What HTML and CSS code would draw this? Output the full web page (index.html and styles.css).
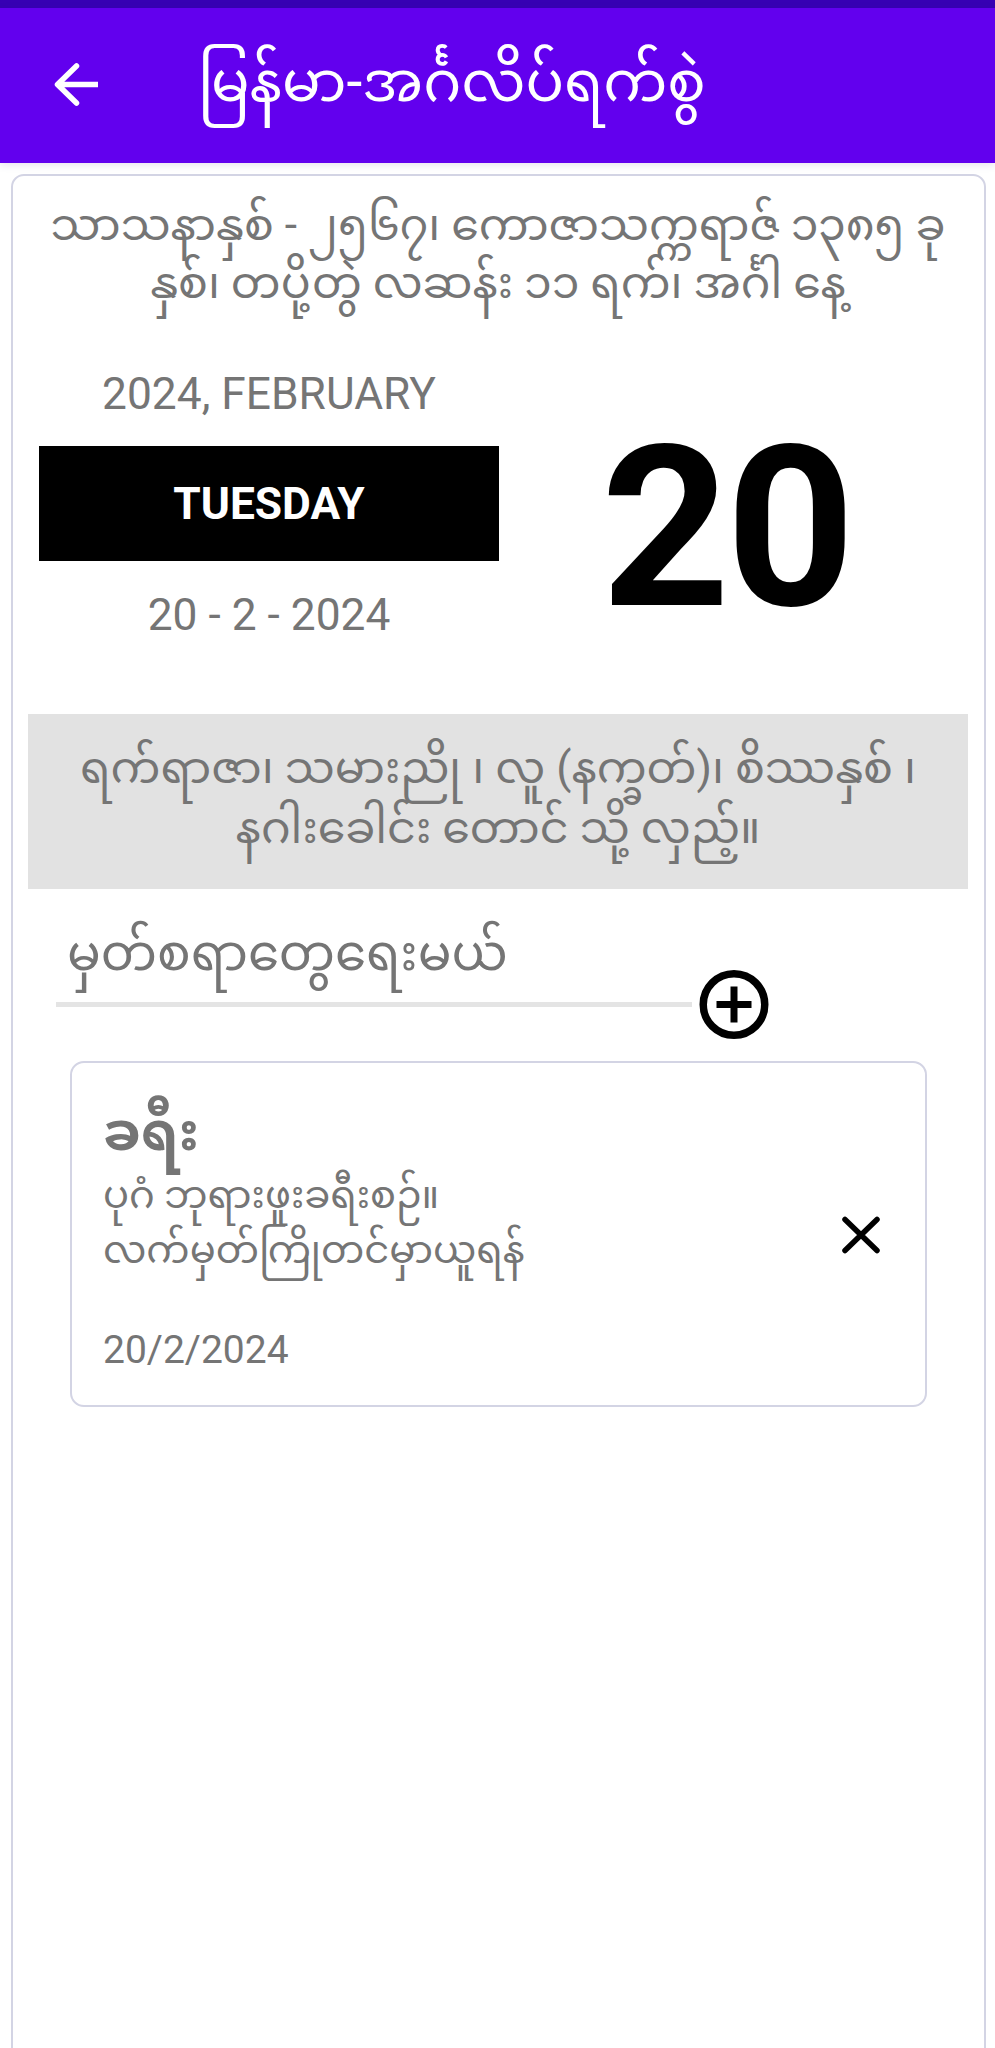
FILE: index.html
```html
<!DOCTYPE html>
<html lang="my">
<head>
<meta charset="utf-8">
<title>မြန်မာ-အင်္ဂလိပ်ရက်စွဲ</title>
<link rel="stylesheet" href="styles.css">
</head>
<body>
<div class="status"></div>
<header class="appbar">
  <svg class="back" viewBox="0 0 44 44" width="44" height="44"><path d="M44 21.5H4M22.5 3 3.5 21.5 22.5 40" fill="none" stroke="#fff" stroke-width="5.5" stroke-linejoin="round" stroke-linecap="round"/></svg>
  <h1 class="title">မြန်မာ-အင်္ဂလိပ်ရက်စွဲ</h1>
</header>
<main class="sheet">
  <p class="era">သာသနာနှစ် - ၂၅၆၇၊ ကောဇာသက္ကရာဇ် ၁၃၈၅ ခု<br>နှစ်၊ တပို့တွဲ လဆန်း ၁၁ ရက်၊ အင်္ဂါ နေ့</p>
  <section class="dateblock">
    <div class="dateleft">
      <div class="month">2024, FEBRUARY</div>
      <div class="weekday">TUESDAY</div>
      <div class="numeric">20 - 2 - 2024</div>
    </div>
    <div class="bigday">20</div>
  </section>
  <p class="info">ရက်ရာဇာ၊ သမားညို ၊ လူ (နက္ခတ်)၊ စိဿနှစ် ၊<br>နဂါးခေါင်း တောင် သို့ လှည့်။</p>
  <div class="addrow">
    <div class="field">မှတ်စရာတွေရေးမယ်</div>
    <svg class="plus" viewBox="0 0 70 69" width="70" height="69"><circle cx="35" cy="34.5" r="30.75" fill="none" stroke="#000" stroke-width="7.5"/><path d="M35 16.5v36M17.5 34.5h35" stroke="#000" stroke-width="7" fill="none"/></svg>
  </div>
  <article class="note">
    <div class="notetext">
      <div class="notetitle">ခရီး</div>
      <div class="notebody">ပုဂံ ဘုရားဖူးခရီးစဉ်။<br>လက်မှတ်ကြိုတင်မှာယူရန်</div>
      <div class="notedate">20/2/2024</div>
    </div>
    <svg class="close" viewBox="0 0 40 38" width="40" height="38"><path d="M4 3.5 36 34.5M36 3.5 4 34.5" stroke="#000" stroke-width="5.5" stroke-linecap="round" fill="none"/></svg>
  </article>
</main>
</body>
</html>
```
FILE: styles.css
```css
* { box-sizing: border-box; }
html, body { margin: 0; height: 2048px; overflow: hidden; background: #fff; }
body { font-family: Roboto, "Noto Sans Myanmar", "Padauk", "Myanmar Text", "Noto Sans", sans-serif; color: #757575; }
.status { height: 8px; background: #3700b3; }
.appbar { height: 155px; background: #6200ee; display: flex; align-items: center; padding: 0 0 2px 54px; box-shadow: 0 2px 8px rgba(60,0,120,.12); }
.back { flex: none; }
.title { margin: 0 0 5px 100px; font-size: 57px; font-weight: 400; color: #fff; line-height: 80px; white-space: nowrap; }
.sheet { margin: 11px 9px 0 11px; height: 1900px; border: 2px solid #d3d4e4; border-radius: 13px; padding: 20px 16px 0 15px; }
.era { margin: 0; font-size: 44.3px; line-height: 58px; text-align: center; white-space: nowrap; }
.dateblock { display: flex; margin-top: 52px; height: 350px; }
.dateleft { width: 460px; margin-left: 11px; display: flex; flex-direction: column; align-items: center; }
.month { font-size: 44.3px; line-height: 60px; }
.weekday { width: 100%; height: 115px; margin-top: 22px; background: #000; color: #fff; font-size: 44.3px; font-weight: 700; line-height: 117px; text-align: center; }
.numeric { font-size: 44.3px; line-height: 60px; margin-top: 24px; }
.bigday { font-size: 225px; font-weight: 700; color: #000; line-height: 230px; margin: 49px 0 0 102px; letter-spacing: -4px; }
.info { margin: 0; height: 175px; padding: 24px 0 0; background: #e2e2e2; font-size: 44.4px; line-height: 60px; text-align: center; }
.addrow { display: flex; margin: 14px 0 0 28px; height: 150px; align-items: flex-start; }
.field { width: 636px; height: 104px; padding: 20px 0 0 11px; border-bottom: 5px solid #e4e4e4; font-size: 50px; line-height: 60px; }
.plus { margin: 67px 0 0 7px; flex: none; }
.note { margin: 8px 41px 0 42px; height: 346px; border: 2px solid #d3d4e4; border-radius: 14px; display: flex; align-items: center; justify-content: space-between; padding: 0 44px 0 31px; }
.notetext { align-self: flex-start; padding-top: 34px; }
.notetitle { font-size: 54px; font-weight: 700; line-height: 70px; }
.notebody { font-size: 38.5px; line-height: 55px; }
.notedate { font-size: 39px; line-height: 50px; margin-top: 48px; }
.close { flex: none; margin-top: 2px; }
```
